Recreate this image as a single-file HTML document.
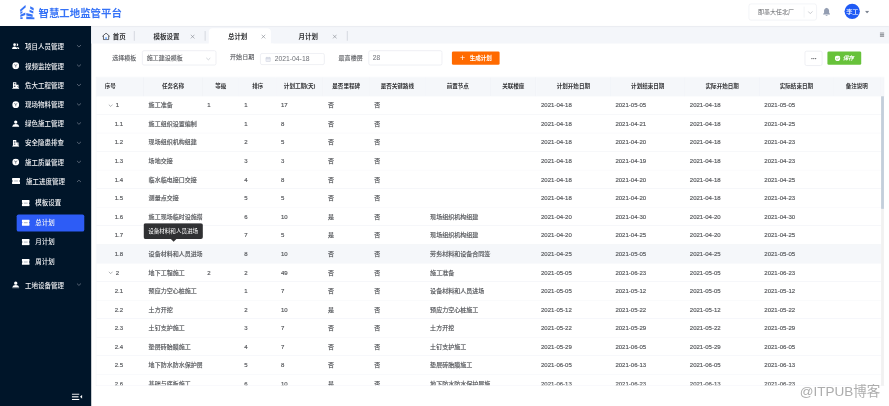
<!DOCTYPE html>
<html lang="zh-CN"><head><meta charset="utf-8"><title>智慧工地监管平台</title>
<style>
*{box-sizing:border-box;margin:0;padding:0}
html,body{width:889px;height:406px;overflow:hidden;background:#fff}
body{font-family:"Liberation Sans","Noto Sans CJK SC",sans-serif;color:#606266}
#w{position:absolute;left:0;top:0;width:1920px;height:877px;transform:scale(0.463021);transform-origin:0 0;overflow:hidden;filter:contrast(1.0001)}
.abs{position:absolute}
#hdr{position:absolute;left:0;top:0;width:1920px;height:56px;background:#fff;box-shadow:0 1px 4px rgba(0,21,41,.12);z-index:5}
#title{position:absolute;left:83.15px;top:0;height:56px;line-height:57px;font-size:22.5px;font-weight:700;color:#3572f7;letter-spacing:0px;white-space:nowrap}
#side{position:absolute;left:0;top:56px;width:196.54px;height:821px;background:#001529}
.mi{position:absolute;left:0;width:196.54px;height:40px;line-height:40px;color:#f4f5f7;font-size:14px;font-weight:500;white-space:nowrap}
.mi .t{position:absolute;left:53.99px;top:0}
.mi svg.ic{position:absolute;left:26.35px;top:11.500px;width:16px;height:16px}
.mi svg.ar{position:absolute;left:164.57px;top:13.500px;width:11px;height:11px}
.si{position:absolute;left:36.07px;width:146.43px;height:37px;line-height:37px;color:#f4f5f7;font-size:14px;font-weight:500;border-radius:4px;white-space:nowrap}
.si.on{background:#2d5cf6}
.si .t{position:absolute;left:40.17px;top:0}
.si svg.ic{position:absolute;left:10.8px;top:11.600px;width:17.28px;height:13.61px}
#tabs{position:absolute;left:196.54px;top:56px;width:1723.46px;height:38.379999999999995px;background:#f4f6fa}
.tab{position:absolute;top:0;height:46px;line-height:46px;font-size:14px;font-weight:700;color:#303133;white-space:nowrap}
.tx{position:absolute;top:17.61px;width:10px;height:10px}
.sep{position:absolute;top:11px;width:2px;height:21px;background:#d3d6dd}
.lbl{position:absolute;font-size:13px;color:#5a5c60;-webkit-text-stroke:.25px #5a5c60;line-height:32px;height:32px;white-space:nowrap}
.inp{position:absolute;height:32px;border:1px solid #dcdfe6;border-radius:4px;background:#fff;font-size:13px;line-height:30px;color:#5a5c60;-webkit-text-stroke:.25px #5a5c60;white-space:nowrap}
#tbl{position:absolute;left:207.12px;top:166.3px;width:1702.95px;height:666.71px;overflow:hidden;border:1px solid #ebeef5;border-right:none}
.th{position:absolute;top:0;height:41.25px;line-height:40.25px;background:#f5f7fa;border-right:1px solid #ebeef5;border-bottom:1px solid #ebeef5;font-size:12px;font-weight:700;color:#303133;text-align:center;white-space:nowrap;overflow:hidden}
.tr{position:absolute;left:0;width:1694.52px;height:40.11px;border-bottom:1px solid #ebeef5;background:#fff}
.tr.hv{background:#f5f7fa}
.td{position:absolute;top:0;height:100%;line-height:39.11px;font-size:13px;color:#55575b;-webkit-text-stroke:0.35px #55575b;padding-left:10px;white-space:nowrap;overflow:hidden}
</style></head>
<body><div id="w">
<div id="hdr">
<svg class="abs" style="left:40.6px;top:9.5px;width:34.34px;height:32.18px" viewBox="0 0 235 220"><g fill="#3673f7"><path d="M16 76 L96 4 L100 40 L20 108Z"/><path d="M20 112 L50 94 L50 122 L20 138Z"/><path d="M20 148 L94 118 L94 154 L20 182Z"/><path d="M20 186 H54 V214 H20Z"/><path d="M166 24 L217 50 L217 88 L166 62Z"/><path d="M156 76 L212 98 L212 132 L156 110Z"/><path d="M108 122 L202 146 L202 182 L108 160Z"/><path d="M108 176 L230 192 L230 218 L108 216Z"/></g></svg>
<div id="title">智慧工地监管平台</div>
<div class="abs" style="left:1616.56px;top:7.78px;width:147.08px;height:36.28px;border:1px solid #e4e7ed;border-radius:5px"></div>
<div class="abs" style="left:1637.08px;top:7.78px;height:36.28px;line-height:36.28px;font-size:13px;color:#606266;white-space:nowrap">即墨大任北厂</div>
<div class="abs" style="left:1735.78px;top:14.04px;width:1px;height:23.76px;background:#e4e7ed"></div>
<svg class="abs" style="left:1743.55px;top:20.95px;width:12.09px;height:12.09px" viewBox="0 0 10 10"><path d="M1 3 L5 7 L9 3" fill="none" stroke="#a8abb2" stroke-width="1.1"/></svg>
<svg class="abs" style="left:1776.59px;top:16.2px;width:16.41px;height:19.44px" viewBox="0 0 16 19"><path fill="#949eb2" d="M8 0.5c.9 0 1.5.6 1.5 1.4 2.4.7 3.8 2.8 3.8 5.4v4.2l2 2.6v1H.7v-1l2-2.6V7.3c0-2.6 1.4-4.7 3.8-5.4C6.500 1.100 7.100.5 8 .5zM6 16.300h4c0 1.200-.9 2.100-2 2.100s-2-.9-2-2.100z"/></svg>
<div class="abs" style="left:1824.11px;top:7.99px;width:33.26px;height:33.26px;border-radius:50%;background:#1f5af5;color:#fff;font-size:13.500px;font-weight:500;line-height:35.76px;text-align:center;letter-spacing:-.5px">李工</div>
<svg class="abs" style="left:1867.52px;top:22.68px;width:9.5px;height:6.48px" viewBox="0 0 10 6"><path d="M0 0h10L5 6z" fill="#7d8592"/></svg>
</div>
<div id="side">
<div class="mi" style="top:24.64px"><svg class="ic" viewBox="0 0 16 16"><path fill="#fff" d="M5.500 1.500a3 3 0 0 1 0 6 3 3 0 0 1 0-6zM0 14c0-3.500 2.200-5.500 5.500-5.500S11 10.500 11 14zM10.800 2a2.600 2.600 0 0 1 0 5.200c-.5 0-.9-.1-1.200-.3.600-.8.900-1.600.900-2.400s-.3-1.700-.8-2.300c.3-.1.700-.2 1.100-.2zM12.200 14c0-2-.6-3.600-1.700-4.700 3 .1 5.500 1.700 5.500 4.700z"/></svg><span class="t">项目人员管理</span><svg class="ar" viewBox="0 0 10 10"><path d="M1 3 L5 6.800 L9 3" fill="none" stroke="#838d9c" stroke-width="1.250"/></svg></div>
<div class="mi" style="top:66.54px"><svg class="ic" viewBox="0 0 16 16"><circle cx="8" cy="8" r="7.300" fill="#fff"/><path d="M4.600 5.400L8 7.200L11.400 5.400M8 7.200V11.600" fill="none" stroke="#001529" stroke-width="1"/></svg><span class="t">视频监控管理</span><svg class="ar" viewBox="0 0 10 10"><path d="M1 3 L5 6.800 L9 3" fill="none" stroke="#838d9c" stroke-width="1.250"/></svg></div>
<div class="mi" style="top:108.22px"><svg class="ic" viewBox="0 0 16 16"><path fill="#fff" d="M2 1.500h7.200v5.500h4.800v7h1.500v1.700h-15v-1.700H2zM4 4v1.300h3.200V4zM4 7v1.300h3.200V7zM4 10v1.300h3.200V10zM10.800 9.500v1.300h1.700V9.500z"/></svg><span class="t">危大工程管理</span><svg class="ar" viewBox="0 0 10 10"><path d="M1 3 L5 6.800 L9 3" fill="none" stroke="#838d9c" stroke-width="1.250"/></svg></div>
<div class="mi" style="top:150.12px"><svg class="ic" viewBox="0 0 16 16"><circle cx="8" cy="8" r="7.300" fill="#fff"/><path d="M4.600 5.400L8 7.200L11.400 5.400M8 7.200V11.600" fill="none" stroke="#001529" stroke-width="1"/></svg><span class="t">现场物料管理</span><svg class="ar" viewBox="0 0 10 10"><path d="M1 3 L5 6.800 L9 3" fill="none" stroke="#838d9c" stroke-width="1.250"/></svg></div>
<div class="mi" style="top:191.59px"><svg class="ic" viewBox="0 0 16 16"><path fill="#fff" d="M8 1a3.600 3.600 0 0 1 0 7.200A3.600 3.600 0 0 1 8 1zM1.200 13c0-2.800 2.800-4.300 6.800-4.300s6.800 1.500 6.800 4.300zM.5 13.800h15V15.500H.5z"/></svg><span class="t">绿色施工管理</span><svg class="ar" viewBox="0 0 10 10"><path d="M1 3 L5 6.800 L9 3" fill="none" stroke="#838d9c" stroke-width="1.250"/></svg></div>
<div class="mi" style="top:233.27px"><svg class="ic" viewBox="0 0 16 16"><path fill="#fff" d="M2 1.500h7.200v5.500h4.800v7h1.500v1.700h-15v-1.700H2zM4 4v1.300h3.200V4zM4 7v1.300h3.200V7zM4 10v1.300h3.200V10zM10.800 9.500v1.300h1.700V9.500z"/></svg><span class="t">安全隐患排查</span><svg class="ar" viewBox="0 0 10 10"><path d="M1 3 L5 6.800 L9 3" fill="none" stroke="#838d9c" stroke-width="1.250"/></svg></div>
<div class="mi" style="top:274.74px"><svg class="ic" viewBox="0 0 16 16"><circle cx="8" cy="8" r="7.300" fill="#fff"/><path d="M4.600 5.400L8 7.200L11.400 5.400M8 7.200V11.600" fill="none" stroke="#001529" stroke-width="1"/></svg><span class="t">施工质量管理</span><svg class="ar" viewBox="0 0 10 10"><path d="M1 3 L5 6.800 L9 3" fill="none" stroke="#838d9c" stroke-width="1.250"/></svg></div>
<div class="mi" style="top:316.21px"><svg class="ic" style="left:26.35px;top:12.200px;width:17.28px;height:13.61px" viewBox="0 0 17 13"><path fill="#fff" d="M1.300 0h14.400a1.300 1.300 0 0 1 1.300 1.300v3.700a1.500 1.500 0 0 0 0 3v3.700a1.300 1.300 0 0 1-1.300 1.300H1.300A1.300 1.300 0 0 1 0 11.700V8a1.500 1.500 0 0 0 0-3V1.300A1.300 1.300 0 0 1 1.300 0z"/><rect x="4.500" y="5.200" width="8" height="2.600" fill="#bcc2cb"/></svg><span class="t" style="left:56.15px">施工进度管理</span><svg class="ar" viewBox="0 0 10 10"><path d="M1 6.500 L5 2.800 L9 6.500" fill="none" stroke="#838d9c" stroke-width="1.250"/></svg></div>
<div class="mi" style="top:539.96px"><svg class="ic" viewBox="0 0 16 16"><path fill="#fff" d="M8 1a3.600 3.600 0 0 1 0 7.200A3.600 3.600 0 0 1 8 1zM1.200 13c0-2.800 2.800-4.300 6.800-4.300s6.800 1.500 6.800 4.300zM.5 13.800h15V15.500H.5z"/></svg><span class="t">工地设备管理</span><svg class="ar" viewBox="0 0 10 10"><path d="M1 3 L5 6.800 L9 3" fill="none" stroke="#838d9c" stroke-width="1.250"/></svg></div>
<div class="si" style="top:364.36px"><svg class="ic" viewBox="0 0 17 13"><path fill="#fff" d="M1.300 0h14.400a1.300 1.300 0 0 1 1.300 1.300v3.700a1.500 1.500 0 0 0 0 3v3.700a1.300 1.300 0 0 1-1.300 1.300H1.300A1.300 1.300 0 0 1 0 11.700V8a1.500 1.500 0 0 0 0-3V1.300A1.300 1.300 0 0 1 1.300 0z"/><rect x="4.500" y="5.200" width="8" height="2.600" fill="#bcc2cb"/></svg><span class="t">模板设置</span></div>
<div class="si on" style="top:406.69px"><svg class="ic" viewBox="0 0 17 13"><path fill="#fff" d="M1.300 0h14.400a1.300 1.300 0 0 1 1.300 1.300v3.700a1.500 1.500 0 0 0 0 3v3.700a1.300 1.300 0 0 1-1.300 1.300H1.300A1.300 1.300 0 0 1 0 11.700V8a1.500 1.500 0 0 0 0-3V1.300A1.300 1.300 0 0 1 1.300 0z"/><rect x="4.500" y="5.200" width="8" height="2.600" fill="#bcc2cb"/></svg><span class="t">总计划</span></div>
<div class="si" style="top:448.80px"><svg class="ic" viewBox="0 0 17 13"><path fill="#fff" d="M1.300 0h14.400a1.300 1.300 0 0 1 1.300 1.300v3.700a1.500 1.500 0 0 0 0 3v3.700a1.300 1.300 0 0 1-1.300 1.300H1.300A1.300 1.300 0 0 1 0 11.700V8a1.500 1.500 0 0 0 0-3V1.300A1.300 1.300 0 0 1 1.300 0z"/><rect x="4.500" y="5.200" width="8" height="2.600" fill="#bcc2cb"/></svg><span class="t">月计划</span></div>
<div class="si" style="top:491.13px"><svg class="ic" viewBox="0 0 17 13"><path fill="#fff" d="M1.300 0h14.400a1.300 1.300 0 0 1 1.300 1.300v3.700a1.500 1.500 0 0 0 0 3v3.700a1.300 1.300 0 0 1-1.300 1.300H1.300A1.300 1.300 0 0 1 0 11.700V8a1.500 1.500 0 0 0 0-3V1.300A1.300 1.300 0 0 1 1.300 0z"/><rect x="4.500" y="5.200" width="8" height="2.600" fill="#bcc2cb"/></svg><span class="t">周计划</span></div>
<svg class="abs" style="left:155.07px;top:793.85px;width:22.68px;height:14.04px" viewBox="0 0 21 13"><g fill="#fff"><rect x="0" y="0" width="15" height="2.200"/><rect x="0" y="5.400" width="13.500" height="2.200"/><rect x="0" y="10.800" width="15" height="2.200"/><path d="M21 2.500v8l-4.500-4z"/></g></svg>
</div>
<div id="tabs">
<div class="abs" style="left:254.42px;top:5.340000000000003px;width:133.9px;height:40px;background:#fff;border-radius:8px 8px 0 0"></div>
<div class="abs" style="left:387.37px;top:32.379999999999995px;width:6px;height:6px;background:radial-gradient(circle at 100% 0,rgba(255,255,255,0) 5.600px,#fff 6.200px)"></div>
<svg class="abs" style="left:23.54px;top:13.980000000000004px;width:18.14px;height:17.06px" viewBox="0 0 18 17"><path d="M1 8.600 L9 1.600 L17 8.600 M3.400 7.200V15.600H14.600V7.200" fill="none" stroke="#3c4047" stroke-width="1.700"/><rect x="7.300" y="10.500" width="3.400" height="4.200" fill="#6aa8ff"/></svg>
<div class="tab" style="left:47.08px">首页</div>
<div class="sep" style="left:92.87px"></div>
<div class="tab" style="left:134.98px">模板设置</div><svg class="tx" style="left:214.68px" viewBox="0 0 10 10"><path d="M.8 .8L9.200 9.200M9.200 .8L.8 9.200" stroke="#7a7f87" stroke-width="1.200" fill="none"/></svg>
<div class="sep" style="left:245.35px"></div>
<div class="tab" style="left:295.67px">总计划</div><svg class="tx" style="left:367.59px" viewBox="0 0 10 10"><path d="M.8 .8L9.200 9.200M9.200 .8L.8 9.200" stroke="#7a7f87" stroke-width="1.200" fill="none"/></svg>
<div class="tab" style="left:448.36px">月计划</div><svg class="tx" style="left:521.14px" viewBox="0 0 10 10"><path d="M.8 .8L9.200 9.200M9.200 .8L.8 9.200" stroke="#7a7f87" stroke-width="1.200" fill="none"/></svg>
<div class="sep" style="left:552.03px"></div>
<svg class="abs" style="left:1703.81px;top:13.500px;width:9.93px;height:10.8px" viewBox="0 0 10 11"><g fill="#4a4f57"><rect y="0" width="10" height="2"/><rect y="4.500" width="10" height="2"/><rect y="9" width="10" height="2"/></g></svg>
</div>
<div class="lbl" style="left:242.54px;top:108.85px">选择模板</div>
<div class="inp" style="left:306.68px;top:108.85px;width:160.25px;height:32.18px;padding-left:9.29px">施工建设模板</div>
<svg class="abs" style="left:445.3px;top:122.42px;width:10px;height:10px" viewBox="0 0 10 10"><path d="M.5 3 L5 7.200 L9.500 3" fill="none" stroke="#b3b7bf" stroke-width="1.300"/></svg>
<div class="lbl" style="left:496.95px;top:108.4px">开始日期</div>
<div class="inp" style="left:561.75px;top:114.9px;width:139.73px;height:25.05px;padding-left:30.45px;font-size:14.700px;line-height:23.05px;color:#6c6f75;-webkit-text-stroke:0">2021-04-18</div>
<svg class="abs" style="left:572.76px;top:122.46px;width:12px;height:12px" viewBox="0 0 12 12"><rect x="1" y="2" width="10" height="9" rx="1" fill="#eef0f6" stroke="#c0c6d4" stroke-width="1"/><path d="M1 4.800h10M3.500 .5v2.500M8.500 .5v2.500" stroke="#c0c6d4" stroke-width="1.200" fill="none"/></svg>
<div class="lbl" style="left:731.28px;top:108.85px">最高楼层</div>
<div class="inp" style="left:795.86px;top:108.85px;width:159.39px;height:32.18px;padding-left:8.42px;color:#808389;font-size:14px;-webkit-text-stroke:.3px #808389">28</div>
<div class="abs" style="left:975.98px;top:111.23px;width:103.02px;height:28.94px;background:#ff6a00;border-radius:3px;color:#fff;font-size:12px;line-height:28.94px;white-space:nowrap;font-weight:700"><span class="abs" style="left:17.28px;top:1px;font-size:19px;font-weight:400">+</span><span class="abs" style="left:38.44px;top:0">生成计划</span></div>
<div class="abs" style="left:1737.5px;top:110.15px;width:38.88px;height:31.53px;border:1px solid #dcdfe6;border-radius:4px"></div>
<div class="abs" style="left:1751.76px;top:125.06px;width:3px;height:3px;border-radius:50%;background:#606266"></div>
<div class="abs" style="left:1755.75px;top:125.06px;width:3px;height:3px;border-radius:50%;background:#606266"></div>
<div class="abs" style="left:1759.75px;top:125.06px;width:3px;height:3px;border-radius:50%;background:#606266"></div>
<div class="abs" style="left:1786.53px;top:110.58px;width:73.00px;height:29.15px;background:#67c23a;border-radius:3px;color:#fff;font-size:12px;line-height:29.16px;white-space:nowrap;font-weight:700;font-style:italic"><span class="abs" style="left:33.69px;top:0">保存</span></div>
<svg class="abs" style="left:1803.16px;top:119.7px;width:12px;height:12px" viewBox="0 0 12 12"><circle cx="6" cy="6" r="6" fill="#fff"/><path d="M3.200 6.200l2 2 3.600-3.800" stroke="#67c23a" stroke-width="1.400" fill="none"/></svg>
<div id="tbl">
<div class="th" style="left:-1.00px;width:103.88px;text-align:left;padding-left:18.87px;">序号</div>
<div class="th" style="left:102.88px;width:126.56px;">任务名称</div>
<div class="th" style="left:229.44px;width:79.91px;">等级</div>
<div class="th" style="left:309.35px;width:79.48px;">排序</div>
<div class="th" style="left:388.83px;width:101.29px;">计划工期(天)</div>
<div class="th" style="left:490.12px;width:100.00px;">是否里程碑</div>
<div class="th" style="left:590.12px;width:120.73px;">是否关键路线</div>
<div class="th" style="left:710.85px;width:140.59px;">前置节点</div>
<div class="th" style="left:851.44px;width:98.92px;">关联楼座</div>
<div class="th" style="left:950.36px;width:160.68px;">计划开始日期</div>
<div class="th" style="left:1111.04px;width:160.69px;">计划结束日期</div>
<div class="th" style="left:1271.73px;width:160.90px;">实际开始日期</div>
<div class="th" style="left:1432.63px;width:159.60px;">实际结束日期</div>
<div class="th" style="left:1592.23px;width:101.29px;">备注说明</div>
<div class="th" style="left:1693.52px;width:8.43px;border-right:1px solid #ebeef5"></div>
<div class="tr" style="top:40.25px">
<div class="td" style="left:-1.00px;width:103.88px;padding-left:42.63px">1</div>
<svg class="abs" style="left:25.56px;top:15px;width:10px;height:10px" viewBox="0 0 10 10"><path d="M.8 2.800 L5 7 L9.200 2.800" fill="none" stroke="#7b7e84" stroke-width="1.250"/></svg>
<div class="td" style="left:102.88px;width:125.56px">施工准备</div>
<div class="td" style="left:229.44px;width:78.91px">1</div>
<div class="td" style="left:309.35px;width:78.48px">1</div>
<div class="td" style="left:388.83px;width:100.29px">17</div>
<div class="td" style="left:490.12px;width:99.00px">否</div>
<div class="td" style="left:590.12px;width:119.73px">否</div>
<div class="td" style="left:950.36px;width:159.68px">2021-04-18</div>
<div class="td" style="left:1111.04px;width:159.69px">2021-05-05</div>
<div class="td" style="left:1271.73px;width:159.90px">2021-04-18</div>
<div class="td" style="left:1432.63px;width:158.60px">2021-05-05</div>
</div>
<div class="tr" style="top:80.36px">
<div class="td" style="left:-1.00px;width:103.88px;padding-left:40.47px">1.1</div>
<div class="td" style="left:102.88px;width:125.56px">施工组织设置编制</div>
<div class="td" style="left:309.35px;width:78.48px">1</div>
<div class="td" style="left:388.83px;width:100.29px">8</div>
<div class="td" style="left:490.12px;width:99.00px">否</div>
<div class="td" style="left:590.12px;width:119.73px">否</div>
<div class="td" style="left:950.36px;width:159.68px">2021-04-18</div>
<div class="td" style="left:1111.04px;width:159.69px">2021-04-21</div>
<div class="td" style="left:1271.73px;width:159.90px">2021-04-18</div>
<div class="td" style="left:1432.63px;width:158.60px">2021-04-25</div>
</div>
<div class="tr" style="top:120.46px">
<div class="td" style="left:-1.00px;width:103.88px;padding-left:40.47px">1.2</div>
<div class="td" style="left:102.88px;width:125.56px">现场组织机构组建</div>
<div class="td" style="left:309.35px;width:78.48px">2</div>
<div class="td" style="left:388.83px;width:100.29px">5</div>
<div class="td" style="left:490.12px;width:99.00px">否</div>
<div class="td" style="left:590.12px;width:119.73px">否</div>
<div class="td" style="left:950.36px;width:159.68px">2021-04-18</div>
<div class="td" style="left:1111.04px;width:159.69px">2021-04-20</div>
<div class="td" style="left:1271.73px;width:159.90px">2021-04-18</div>
<div class="td" style="left:1432.63px;width:158.60px">2021-04-23</div>
</div>
<div class="tr" style="top:160.57px">
<div class="td" style="left:-1.00px;width:103.88px;padding-left:40.47px">1.3</div>
<div class="td" style="left:102.88px;width:125.56px">场地交接</div>
<div class="td" style="left:309.35px;width:78.48px">3</div>
<div class="td" style="left:388.83px;width:100.29px">3</div>
<div class="td" style="left:490.12px;width:99.00px">否</div>
<div class="td" style="left:590.12px;width:119.73px">否</div>
<div class="td" style="left:950.36px;width:159.68px">2021-04-18</div>
<div class="td" style="left:1111.04px;width:159.69px">2021-04-19</div>
<div class="td" style="left:1271.73px;width:159.90px">2021-04-18</div>
<div class="td" style="left:1432.63px;width:158.60px">2021-04-23</div>
</div>
<div class="tr" style="top:200.67px">
<div class="td" style="left:-1.00px;width:103.88px;padding-left:40.47px">1.4</div>
<div class="td" style="left:102.88px;width:125.56px">临水临电接口交接</div>
<div class="td" style="left:309.35px;width:78.48px">4</div>
<div class="td" style="left:388.83px;width:100.29px">8</div>
<div class="td" style="left:490.12px;width:99.00px">否</div>
<div class="td" style="left:590.12px;width:119.73px">否</div>
<div class="td" style="left:950.36px;width:159.68px">2021-04-18</div>
<div class="td" style="left:1111.04px;width:159.69px">2021-04-20</div>
<div class="td" style="left:1271.73px;width:159.90px">2021-04-18</div>
<div class="td" style="left:1432.63px;width:158.60px">2021-04-25</div>
</div>
<div class="tr" style="top:240.78px">
<div class="td" style="left:-1.00px;width:103.88px;padding-left:40.47px">1.5</div>
<div class="td" style="left:102.88px;width:125.56px">测量点交接</div>
<div class="td" style="left:309.35px;width:78.48px">5</div>
<div class="td" style="left:388.83px;width:100.29px">5</div>
<div class="td" style="left:490.12px;width:99.00px">否</div>
<div class="td" style="left:590.12px;width:119.73px">否</div>
<div class="td" style="left:950.36px;width:159.68px">2021-04-18</div>
<div class="td" style="left:1111.04px;width:159.69px">2021-04-20</div>
<div class="td" style="left:1271.73px;width:159.90px">2021-04-18</div>
<div class="td" style="left:1432.63px;width:158.60px">2021-04-23</div>
</div>
<div class="tr" style="top:280.89px">
<div class="td" style="left:-1.00px;width:103.88px;padding-left:40.47px">1.6</div>
<div class="td" style="left:102.88px;width:125.56px">施工现场临时设施搭建</div>
<div class="td" style="left:309.35px;width:78.48px">6</div>
<div class="td" style="left:388.83px;width:100.29px">10</div>
<div class="td" style="left:490.12px;width:99.00px">是</div>
<div class="td" style="left:590.12px;width:119.73px">否</div>
<div class="td" style="left:710.85px;width:139.59px">现场组织机构组建</div>
<div class="td" style="left:950.36px;width:159.68px">2021-04-20</div>
<div class="td" style="left:1111.04px;width:159.69px">2021-04-30</div>
<div class="td" style="left:1271.73px;width:159.90px">2021-04-20</div>
<div class="td" style="left:1432.63px;width:158.60px">2021-04-30</div>
</div>
<div class="tr" style="top:320.99px">
<div class="td" style="left:-1.00px;width:103.88px;padding-left:40.47px">1.7</div>
<div class="td" style="left:102.88px;width:125.56px">劳务材料和设备合同签订</div>
<div class="td" style="left:309.35px;width:78.48px">7</div>
<div class="td" style="left:388.83px;width:100.29px">5</div>
<div class="td" style="left:490.12px;width:99.00px">是</div>
<div class="td" style="left:590.12px;width:119.73px">否</div>
<div class="td" style="left:710.85px;width:139.59px">现场组织机构组建</div>
<div class="td" style="left:950.36px;width:159.68px">2021-04-20</div>
<div class="td" style="left:1111.04px;width:159.69px">2021-04-25</div>
<div class="td" style="left:1271.73px;width:159.90px">2021-04-20</div>
<div class="td" style="left:1432.63px;width:158.60px">2021-04-25</div>
</div>
<div class="tr hv" style="top:361.10px">
<div class="td" style="left:-1.00px;width:103.88px;padding-left:40.47px">1.8</div>
<div class="td" style="left:102.88px;width:125.56px">设备材料和人员进场</div>
<div class="td" style="left:309.35px;width:78.48px">8</div>
<div class="td" style="left:388.83px;width:100.29px">10</div>
<div class="td" style="left:490.12px;width:99.00px">否</div>
<div class="td" style="left:590.12px;width:119.73px">否</div>
<div class="td" style="left:710.85px;width:139.59px">劳务材料和设备合同签订</div>
<div class="td" style="left:950.36px;width:159.68px">2021-04-25</div>
<div class="td" style="left:1111.04px;width:159.69px">2021-05-05</div>
<div class="td" style="left:1271.73px;width:159.90px">2021-04-25</div>
<div class="td" style="left:1432.63px;width:158.60px">2021-05-05</div>
</div>
<div class="tr" style="top:401.21px">
<div class="td" style="left:-1.00px;width:103.88px;padding-left:42.63px">2</div>
<svg class="abs" style="left:25.56px;top:15px;width:10px;height:10px" viewBox="0 0 10 10"><path d="M.8 2.800 L5 7 L9.200 2.800" fill="none" stroke="#7b7e84" stroke-width="1.250"/></svg>
<div class="td" style="left:102.88px;width:125.56px">地下工程施工</div>
<div class="td" style="left:229.44px;width:78.91px">2</div>
<div class="td" style="left:309.35px;width:78.48px">2</div>
<div class="td" style="left:388.83px;width:100.29px">49</div>
<div class="td" style="left:490.12px;width:99.00px">否</div>
<div class="td" style="left:590.12px;width:119.73px">否</div>
<div class="td" style="left:710.85px;width:139.59px">施工准备</div>
<div class="td" style="left:950.36px;width:159.68px">2021-05-05</div>
<div class="td" style="left:1111.04px;width:159.69px">2021-06-23</div>
<div class="td" style="left:1271.73px;width:159.90px">2021-05-05</div>
<div class="td" style="left:1432.63px;width:158.60px">2021-06-23</div>
</div>
<div class="tr" style="top:441.31px">
<div class="td" style="left:-1.00px;width:103.88px;padding-left:40.47px">2.1</div>
<div class="td" style="left:102.88px;width:125.56px">预应力空心桩施工</div>
<div class="td" style="left:309.35px;width:78.48px">1</div>
<div class="td" style="left:388.83px;width:100.29px">7</div>
<div class="td" style="left:490.12px;width:99.00px">否</div>
<div class="td" style="left:590.12px;width:119.73px">否</div>
<div class="td" style="left:710.85px;width:139.59px">设备材料和人员进场</div>
<div class="td" style="left:950.36px;width:159.68px">2021-05-05</div>
<div class="td" style="left:1111.04px;width:159.69px">2021-05-12</div>
<div class="td" style="left:1271.73px;width:159.90px">2021-05-05</div>
<div class="td" style="left:1432.63px;width:158.60px">2021-05-12</div>
</div>
<div class="tr" style="top:481.42px">
<div class="td" style="left:-1.00px;width:103.88px;padding-left:40.47px">2.2</div>
<div class="td" style="left:102.88px;width:125.56px">土方开挖</div>
<div class="td" style="left:309.35px;width:78.48px">2</div>
<div class="td" style="left:388.83px;width:100.29px">10</div>
<div class="td" style="left:490.12px;width:99.00px">是</div>
<div class="td" style="left:590.12px;width:119.73px">否</div>
<div class="td" style="left:710.85px;width:139.59px">预应力空心桩施工</div>
<div class="td" style="left:950.36px;width:159.68px">2021-05-12</div>
<div class="td" style="left:1111.04px;width:159.69px">2021-05-22</div>
<div class="td" style="left:1271.73px;width:159.90px">2021-05-12</div>
<div class="td" style="left:1432.63px;width:158.60px">2021-05-22</div>
</div>
<div class="tr" style="top:521.52px">
<div class="td" style="left:-1.00px;width:103.88px;padding-left:40.47px">2.3</div>
<div class="td" style="left:102.88px;width:125.56px">土钉支护施工</div>
<div class="td" style="left:309.35px;width:78.48px">3</div>
<div class="td" style="left:388.83px;width:100.29px">7</div>
<div class="td" style="left:490.12px;width:99.00px">否</div>
<div class="td" style="left:590.12px;width:119.73px">否</div>
<div class="td" style="left:710.85px;width:139.59px">土方开挖</div>
<div class="td" style="left:950.36px;width:159.68px">2021-05-22</div>
<div class="td" style="left:1111.04px;width:159.69px">2021-05-29</div>
<div class="td" style="left:1271.73px;width:159.90px">2021-05-22</div>
<div class="td" style="left:1432.63px;width:158.60px">2021-05-29</div>
</div>
<div class="tr" style="top:561.63px">
<div class="td" style="left:-1.00px;width:103.88px;padding-left:40.47px">2.4</div>
<div class="td" style="left:102.88px;width:125.56px">垫层砖胎膜施工</div>
<div class="td" style="left:309.35px;width:78.48px">4</div>
<div class="td" style="left:388.83px;width:100.29px">7</div>
<div class="td" style="left:490.12px;width:99.00px">否</div>
<div class="td" style="left:590.12px;width:119.73px">否</div>
<div class="td" style="left:710.85px;width:139.59px">土钉支护施工</div>
<div class="td" style="left:950.36px;width:159.68px">2021-05-29</div>
<div class="td" style="left:1111.04px;width:159.69px">2021-06-05</div>
<div class="td" style="left:1271.73px;width:159.90px">2021-05-29</div>
<div class="td" style="left:1432.63px;width:158.60px">2021-06-05</div>
</div>
<div class="tr" style="top:601.74px">
<div class="td" style="left:-1.00px;width:103.88px;padding-left:40.47px">2.5</div>
<div class="td" style="left:102.88px;width:125.56px">地下防水防水保护层施工</div>
<div class="td" style="left:309.35px;width:78.48px">5</div>
<div class="td" style="left:388.83px;width:100.29px">8</div>
<div class="td" style="left:490.12px;width:99.00px">否</div>
<div class="td" style="left:590.12px;width:119.73px">否</div>
<div class="td" style="left:710.85px;width:139.59px">垫层砖胎膜施工</div>
<div class="td" style="left:950.36px;width:159.68px">2021-06-05</div>
<div class="td" style="left:1111.04px;width:159.69px">2021-06-13</div>
<div class="td" style="left:1271.73px;width:159.90px">2021-06-05</div>
<div class="td" style="left:1432.63px;width:158.60px">2021-06-13</div>
</div>
<div class="tr" style="top:641.84px">
<div class="td" style="left:-1.00px;width:103.88px;padding-left:40.47px">2.6</div>
<div class="td" style="left:102.88px;width:125.56px">基础与底板施工</div>
<div class="td" style="left:309.35px;width:78.48px">6</div>
<div class="td" style="left:388.83px;width:100.29px">10</div>
<div class="td" style="left:490.12px;width:99.00px">是</div>
<div class="td" style="left:590.12px;width:119.73px">否</div>
<div class="td" style="left:710.85px;width:139.59px">地下防水防水保护层施工</div>
<div class="td" style="left:950.36px;width:159.68px">2021-06-13</div>
<div class="td" style="left:1111.04px;width:159.69px">2021-06-23</div>
<div class="td" style="left:1271.73px;width:159.90px">2021-06-13</div>
<div class="td" style="left:1432.63px;width:158.60px">2021-06-23</div>
</div>
</div>
<div class="abs" style="left:1902.72px;top:207.55px;width:6.7px;height:625.46px;background:#f1f1f1"></div>
<div class="abs" style="left:1902.72px;top:207.98px;width:6.7px;height:242.54px;background:#c3cedb"></div>
<div class="abs" style="left:310.14px;top:482.48px;width:127.64px;height:33.48px;background:#303133;border-radius:4px;color:#fff;font-size:12px;line-height:36.98px;text-align:center;white-space:nowrap;z-index:9">设备材料和人员进场</div>
<div class="abs" style="left:367.5px;top:515.46px;width:0;height:0;border:7px solid transparent;border-top:7.500px solid #303133;border-bottom:none;z-index:9"></div>
<div class="abs" style="left:1727.14px;top:824.8px;font-size:29.26px;line-height:43.19px;color:#adadad;white-space:nowrap;z-index:10;text-shadow:0 0 2px #fff">@ITPUB博客</div>
</div></body></html>
